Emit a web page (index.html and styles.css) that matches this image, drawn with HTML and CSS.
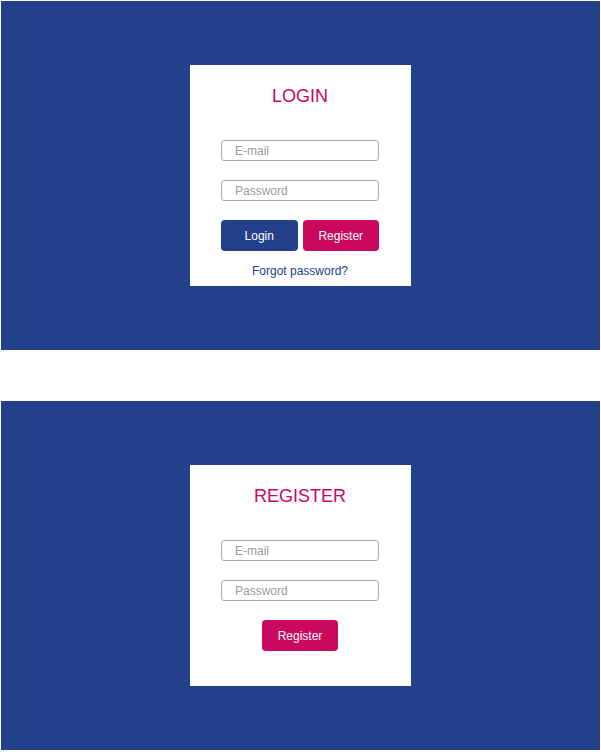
FILE: index.html
```html
<!DOCTYPE html>
<html lang="en">
<head>
  <meta charset="UTF-8" />
  <title>Login / Register</title>
  <meta name="viewport" content="width=device-width, initial-scale=1.0" />
  <link rel="stylesheet" href="styles.css">
</head>
<body>

<div class="page">
  <section class="panel">
    <div class="card">
      <h1 class="title">LOGIN</h1>
      <form class="form" onsubmit="return false;">
        <input class="field" type="email" placeholder="E-mail" />
        <input class="field" type="password" placeholder="Password" />
        <div class="actions">
          <button class="btn btn-blue">Login</button>
          <button class="btn btn-pink">Register</button>
        </div>
      </form>
      <a class="forgot" href="#">Forgot password?</a>
    </div>
  </section>

  <section class="panel">
    <div class="card">
      <h1 class="title">REGISTER</h1>
      <form class="form" onsubmit="return false;">
        <input class="field" type="email" placeholder="E-mail" />
        <input class="field" type="password" placeholder="Password" />
        <div class="actions single">
          <button class="btn btn-pink">Register</button>
        </div>
      </form>
    </div>
  </section>
</div>

</body>
</html>
```

FILE: styles.css
```css
* {
  margin: 0; padding: 0; box-sizing: border-box;
  font-family: "Liberation Sans", Arial, sans-serif;
}
body {
  background: #fff;
}
.page {
  padding: 1px 1px 0 1px;
}
.panel {
  background: #23418b;
  height: 349px;
  margin-bottom: 51px;
  display: flex;
  justify-content: center;
  align-items: center;
}
.card {
  background: #fff;
  width: 221px;
  height: 221px;
  padding: 21px 32px 0 31px;
  display: flex;
  flex-direction: column;
  text-align: center;
}
.title {
  font-size: 18px;
  font-weight: normal;
  line-height: 20px;
  color: #c9085e;
  margin-bottom: 34px;
}
.form {
  display: flex;
  flex-direction: column;
  gap: 19px;
}
.field {
  width: 100%;
  height: 21px;
  border: 1px solid #aaa;
  border-radius: 3px;
  padding: 0 13px;
  font-size: 12px;
  color: #333;
  outline: none;
}
.field::placeholder {
  color: #9a9a9a;
}
.actions {
  display: flex;
  gap: 5px;
}
.actions.single {
  justify-content: center;
}
.btn {
  flex: 1;
  height: 31px;
  border: none;
  border-radius: 4px;
  color: #fff;
  font-size: 12px;
  cursor: pointer;
}
.actions.single .btn {
  flex: 0 0 76px;
}
.btn-blue {
  background: #23418b;
}
.btn-pink {
  background: #c9085e;
}
.forgot {
  margin-top: 13px;
  font-size: 12px;
  line-height: 14px;
  color: #23418b;
  text-decoration: none;
}
```
